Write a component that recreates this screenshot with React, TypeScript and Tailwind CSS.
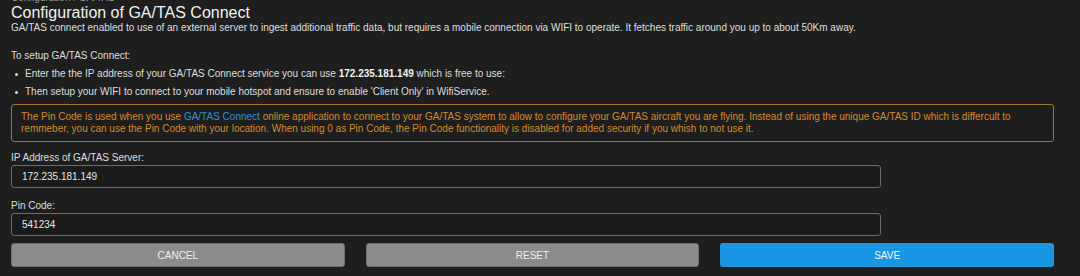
import { useState } from "react";

export default function App() {
  const [ip, setIp] = useState("172.235.181.149");
  const [pin, setPin] = useState("541234");

  return (
    <div
      className="w-[1080px] h-[276px] overflow-hidden bg-[#1e1e1e] pl-[11px] pr-[26px] text-[#dedede]"
      style={{ fontFamily: '"Liberation Sans", Arial, sans-serif' }}
    >
      {/* breadcrumb, scrolled mostly out of view */}
      <div className="-mt-[8px] text-[10px] leading-[12px] text-[#9a9a9a]">Configuration / GA/TAS</div>

      <h1 className="text-[16px] leading-[18px] text-[#f2f2f2]">Configuration of GA/TAS Connect</h1>
      <p className="text-[10px] leading-[12px]">
        GA/TAS connect enabled to use of an external server to ingest additional traffic data, but requires a mobile
        connection via WIFI to operate. It fetches traffic around you up to about 50Km away.
      </p>

      <p className="mt-[16px] text-[10px] leading-[12px]">To setup GA/TAS Connect:</p>
      <ul className="mt-[3px] text-[10px] leading-[18px]">
        <li className="flex items-center">
          <span className="ml-[4px] mr-[7px] w-[3px] h-[3px] rounded-full bg-[#dedede]" />
          <span>
            Enter the the IP address of your GA/TAS Connect service you can use{" "}
            <b className="font-bold text-[#f2f2f2]">172.235.181.149</b> which is free to use:
          </span>
        </li>
        <li className="flex items-center">
          <span className="ml-[4px] mr-[7px] w-[3px] h-[3px] rounded-full bg-[#dedede]" />
          <span>
            Then setup your WIFI to connect to your mobile hotspot and ensure to enable 'Client Only' in WifiService.
          </span>
        </li>
      </ul>

      {/* Pin code notice */}
      <div className="mt-[3px] rounded-[3px] border border-[#a8712f] px-[9px] py-[6px] text-[10px] leading-[12px] text-[#d38a2c]">
        The Pin Code is used when you use <span className="text-[#2e8fd6]">GA/TAS Connect</span> online application
        to connect to your GA/TAS system to allow to configure your GA/TAS aircraft you are flying. Instead of using
        the unique GA/TAS ID which is differcult to remmeber, you can use the Pin Code with your location. When using
        0 as Pin Code, the Pin Code functionality is disabled for added security if you whish to not use it.
      </div>

      <label className="mt-[10px] block text-[10px] leading-[12px]">IP Address of GA/TAS Server:</label>
      <input
        value={ip}
        onChange={(e) => setIp(e.target.value)}
        className="mt-[1px] block w-[870px] h-[23px] rounded-[3px] border border-[#6c6c6c] bg-[#1b1b1b] px-[10px] text-[10px] text-[#e6e6e6] outline-none"
      />

      <label className="mt-[12px] block text-[10px] leading-[12px]">Pin Code:</label>
      <input
        value={pin}
        onChange={(e) => setPin(e.target.value)}
        className="mt-[1px] block w-[870px] h-[23px] rounded-[3px] border border-[#6c6c6c] bg-[#1b1b1b] px-[10px] text-[10px] text-[#e6e6e6] outline-none"
      />

      <div className="mt-[7px] grid grid-cols-3 gap-[21px]">
        <button className="h-[24px] rounded-[3px] border border-[#707070] bg-[#8b8b8b] text-[10px] text-[#f0f0f0]">
          CANCEL
        </button>
        <button className="h-[24px] rounded-[3px] border border-[#707070] bg-[#8b8b8b] text-[10px] text-[#f0f0f0]">
          RESET
        </button>
        <button className="h-[24px] rounded-[3px] bg-[#1a95e1] text-[10px] text-[#f4f8fc]">SAVE</button>
      </div>
    </div>
  );
}
